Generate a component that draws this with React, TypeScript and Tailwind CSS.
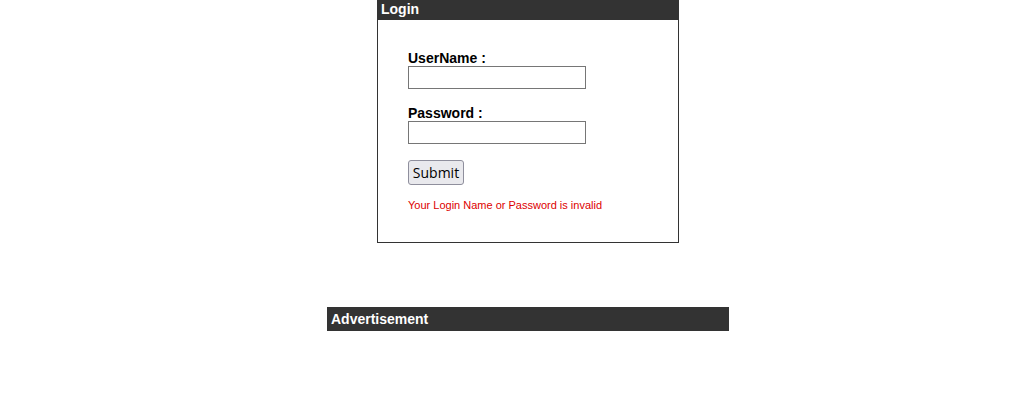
export default function App() {
  return (
    <div className="w-[1012px] h-[420px] bg-white" style={{ fontFamily: '"Liberation Sans", Arial, sans-serif' }}>
      {/* Login box */}
      <div className="ml-[377px] w-[302px]">
        <div className="h-5 bg-[#333333] px-1 text-sm font-bold leading-[18px] text-white">Login</div>
        <div className="h-[223px] border-x border-b border-[#333333] pl-[30px] pt-[30px]">
          <div className="text-sm font-bold leading-4 text-black">UserName :</div>
          <input type="text" className="block h-[23px] w-[178px] border border-[#767676] bg-white" />
          <div className="mt-4 text-sm font-bold leading-4 text-black">Password :</div>
          <input type="password" className="block h-[23px] w-[178px] border border-[#767676] bg-white" />
          <button
            className="mt-4 h-[25px] w-[56px] rounded-[3px] border border-[#8f8f9d] bg-[#e9e9ed] text-[14px] leading-none text-black"
            style={{ fontFamily: '"Open Sans", "Noto Sans", sans-serif' }}
          >
            Submit
          </button>
          <div className="mt-[14px] text-[11px] leading-[13px] text-[#dd0000]">Your Login Name or Password is invalid</div>
        </div>
      </div>
      {/* Advertisement */}
      <div className="ml-[327px] mt-16 h-6 w-[402px] bg-[#333333] px-1 text-sm font-bold leading-6 text-white">
        Advertisement
      </div>
    </div>
  );
}
